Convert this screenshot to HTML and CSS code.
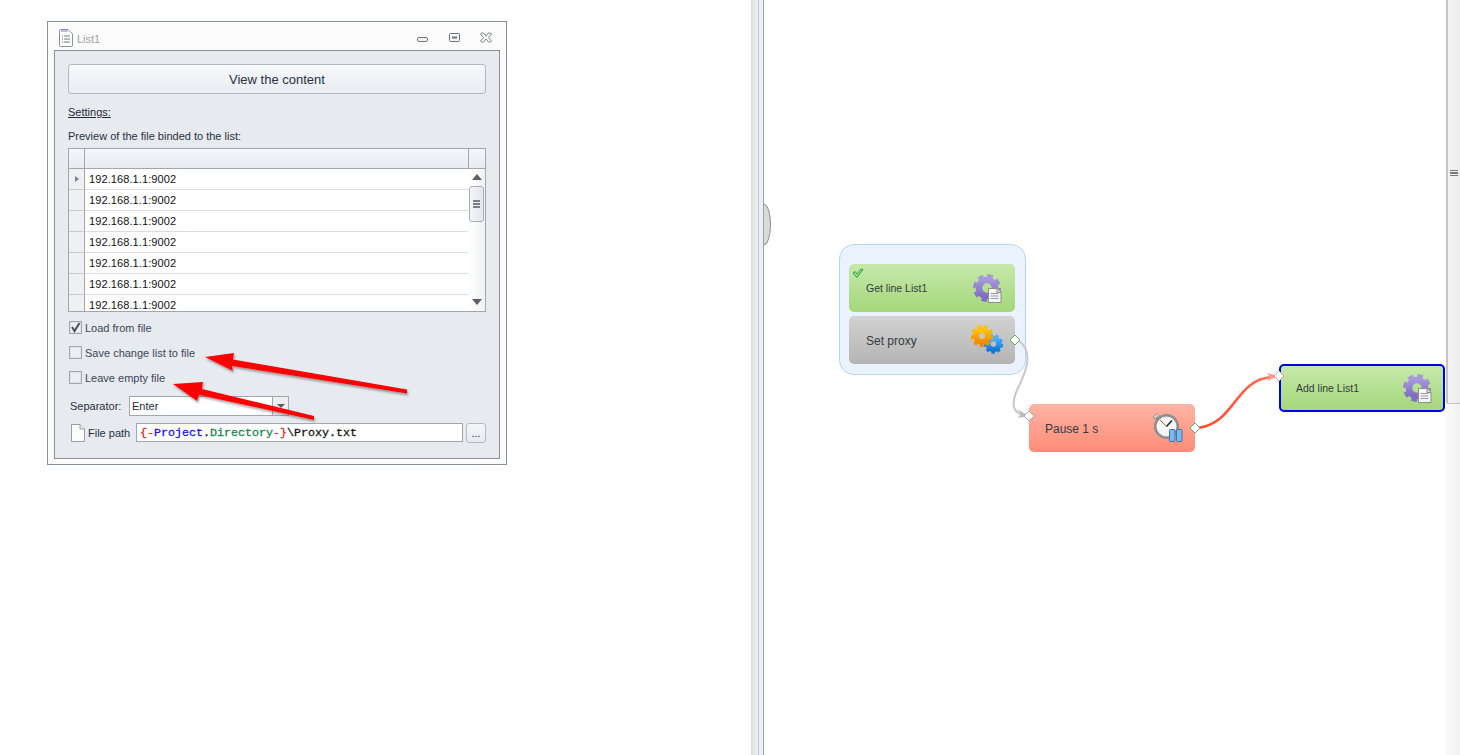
FILE: index.html
```html
<!DOCTYPE html>
<html lang="en">
<head>
<meta charset="utf-8">
<title>List1</title>
<link rel="stylesheet" href="styles.css">
</head>
<body>
<svg class="defs" width="0" height="0" aria-hidden="true">
  <defs>
    <linearGradient id="purple" x1="0" y1="0" x2="0" y2="1"><stop offset="0" stop-color="#a797de"/><stop offset="1" stop-color="#7f6cc4"/></linearGradient>
    <linearGradient id="orange" x1="0" y1="0" x2="0" y2="1"><stop offset="0" stop-color="#ffc400"/><stop offset="1" stop-color="#f08a00"/></linearGradient>
    <linearGradient id="blue" x1="0" y1="0" x2="0" y2="1"><stop offset="0" stop-color="#47b4ff"/><stop offset="1" stop-color="#1276d8"/></linearGradient>
    <linearGradient id="redfade" x1="0" y1="0" x2="1" y2="0"><stop offset="0" stop-color="#ff4526"/><stop offset="1" stop-color="#ff6d55"/></linearGradient>
    <radialGradient id="face" cx=".45" cy=".4" r=".7"><stop offset="0" stop-color="#ffffff"/><stop offset=".7" stop-color="#f2f2f2"/><stop offset="1" stop-color="#c4c4c4"/></radialGradient>
    <filter id="arrowshadow" x="-10%" y="-30%" width="120%" height="160%"><feDropShadow dx="1" dy="2" stdDeviation="1" flood-color="#555" flood-opacity=".55"/></filter>
    <symbol id="gear-doc" viewBox="0 0 30 30">
      <circle cx="15" cy="15" r="11.5" fill="none" stroke="url(#purple)" stroke-width="5" stroke-dasharray="5.2 3.83"/>
      <circle cx="15" cy="15" r="8" fill="none" stroke="url(#purple)" stroke-width="6.5"/>
      <path d="M16.5 15.5h9l3.500 3.500v10.500h-12.500z" fill="#f6f6f2" stroke="#8b8f8a"/>
      <path d="M25 15.500v4h4" fill="#d9d9d4" stroke="#8b8f8a"/>
      <path d="M18.500 20.500h8M18.500 23h8M18.500 25.500h8" stroke="#9a94b8"/>
    </symbol>
    <symbol id="doc" viewBox="0 0 14 18">
      <path d="M.5.5h8.500l4.500 4.500v12.500h-13z" fill="#fdfdfd" stroke="#9a9fa6"/>
      <path d="M9 .5v4.500h4.500" fill="#eceef0" stroke="#9a9fa6"/>
    </symbol>
  </defs>
</svg>

<main class="left-pane">
  <section class="window">
    <header class="titlebar">
      <svg class="title-icon" width="14" height="18" viewBox="0 0 14 18">
        <path d="M1.500.5h7.500l4.500 4.500v11.500a1 1 0 0 1-1 1h-11a1 1 0 0 1-1-1v-15a1 1 0 0 1 1-1z" fill="#fff" stroke="#8b8f96"/>
        <path d="M2 1h7v2H2z" fill="#c9b8ea"/>
        <path d="M3 7h1M5 7h6M3 10h1M5 10h6M3 13h1M5 13h6" stroke="#70757c"/>
      </svg>
      <span class="title-text">List1</span>
      <div class="win-buttons">
        <svg width="12" height="12" viewBox="0 0 12 12"><rect x=".5" y="5.500" width="10" height="4" rx="1.500" fill="#f4f5f6" stroke="#6f747b"/></svg>
        <svg width="12" height="12" viewBox="0 0 12 12"><rect x=".5" y="1.500" width="10" height="8" rx="1" fill="#f4f5f6" stroke="#6f747b"/><path d="M3 5.500h5" stroke="#6f747b" stroke-width="2"/></svg>
        <svg width="12" height="12" viewBox="0 0 12 12"><path d="M1.500 1h2l2.500 3 2.500-3h2l1 1-3 3.500 3 3.500-1 1h-2l-2.500-3-2.500 3h-2l-1-1 3-3.500-3-3.500z" fill="#f8f8f8" stroke="#7d8288"/></svg>
      </div>
    </header>
    <div class="panel">
      <button class="view-btn">View the content</button>
      <div class="settings">Settings:</div>
      <div class="preview">Preview of the file binded to the list:</div>

      <div class="grid">
        <div class="grid-head">
          <div class="head-sel"></div>
          <div class="head-main"></div>
          <div class="head-scroll"></div>
        </div>
        <div class="grid-body">
          <div class="rows">
            <div class="row"><div class="sel"><span class="row-marker"></span></div><div class="cell">192.168.1.1:9002</div></div>
            <div class="row"><div class="sel"></div><div class="cell">192.168.1.1:9002</div></div>
            <div class="row"><div class="sel"></div><div class="cell">192.168.1.1:9002</div></div>
            <div class="row"><div class="sel"></div><div class="cell">192.168.1.1:9002</div></div>
            <div class="row"><div class="sel"></div><div class="cell">192.168.1.1:9002</div></div>
            <div class="row"><div class="sel"></div><div class="cell">192.168.1.1:9002</div></div>
            <div class="row"><div class="sel"></div><div class="cell">192.168.1.1:9002</div></div>
          </div>
          <div class="vscroll">
            <span class="tri-up"></span>
            <div class="thumb"><span></span><span></span><span></span></div>
            <span class="tri-down"></span>
          </div>
        </div>
      </div>

      <div class="checks">
        <label class="check"><span class="box on"><svg width="11" height="11" viewBox="0 0 11 11"><path d="M2 5l2.500 4L9.500 1" fill="none" stroke="#4a4f55" stroke-width="2"/></svg></span>Load from file</label>
        <label class="check"><span class="box"></span>Save change list to file</label>
        <label class="check"><span class="box"></span>Leave empty file</label>
      </div>

      <div class="sep-row">
        <span class="sep-label">Separator:</span>
        <div class="combo"><span class="combo-val">Enter</span><span class="combo-btn"><span class="tri-down small"></span></span></div>
      </div>

      <div class="file-row">
        <svg class="file-icon" width="14" height="18"><use href="#doc"/></svg>
        <span class="file-label">File path</span>
        <div class="path-input"><span class="c-red">{-</span><span class="c-blue">Project</span>.<span class="c-green">Directory</span><span class="c-red">-}</span>\Proxy.txt</div>
        <button class="dots-btn">...</button>
      </div>
    </div>
  </section>

  <svg class="arrows" width="460" height="130" viewBox="0 0 460 130">
    <g fill="#ff0000" filter="url(#arrowshadow)">
      <path d="M155 27L184 23 183 29.500 357 59.500 357 63.500 182 36 183 41z"/>
      <path d="M123 54L153 52 152 59 264 86 264 90 149 65 147 71z"/>
    </g>
  </svg>
</main>

<div class="splitter"><span class="split-grip"></span></div>

<section class="canvas">
  <div class="group"></div>
  <div class="node green get-line">
    <svg class="tick" width="12" height="11" viewBox="0 0 12 11"><path d="M1 5l4 4.500L11 1.500 9 1 5 6 3 3.500z" fill="#8fe08a" stroke="#3a9a45"/></svg>
    <span class="label small-label">Get line List1</span>
    <svg class="node-icon" width="30" height="30"><use href="#gear-doc"/></svg>
  </div>
  <div class="node gray set-proxy">
    <span class="label">Set proxy</span>
    <svg class="node-icon wide" width="34" height="30" viewBox="0 0 34 30">
      <circle cx="23.500" cy="19" r="8" fill="none" stroke="url(#blue)" stroke-width="3.500" stroke-dasharray="3.200 2.400"/>
      <circle cx="23.500" cy="19" r="5.500" fill="none" stroke="url(#blue)" stroke-width="5.500"/>
      <circle cx="12" cy="11" r="9.500" fill="none" stroke="url(#orange)" stroke-width="3.500" stroke-dasharray="3.800 2.830"/>
      <circle cx="12" cy="11" r="6" fill="none" stroke="url(#orange)" stroke-width="6"/>
    </svg>
  </div>
  <div class="node red pause">
    <span class="label">Pause 1 s</span>
    <svg class="node-icon clock" width="34" height="33" viewBox="0 0 34 33">
      <path d="M3 5l4-3.500 2 2-4 3.500z" fill="#d8d8d8" stroke="#8e8e8e"/>
      <path d="M6 6l3 3" stroke="#8e8e8e" stroke-width="2"/>
      <circle cx="16.500" cy="14.500" r="11.300" fill="url(#face)" stroke="#8e8e8e" stroke-width="2.500"/>
      <path d="M16.500 14.500L10 8" stroke="#e04a3a"/>
      <path d="M16.500 14.500l5.500-6" stroke="#222" stroke-width="1.500"/>
      <rect x="19.500" y="17.500" width="5.500" height="12" rx="1" fill="#7fb8e8" stroke="#2f78b8"/>
      <rect x="26.500" y="17.500" width="5.500" height="12" rx="1" fill="#7fb8e8" stroke="#2f78b8"/>
    </svg>
  </div>
  <div class="node green add-line selected">
    <span class="label small-label">Add line List1</span>
    <svg class="node-icon" width="30" height="30"><use href="#gear-doc"/></svg>
  </div>

  <svg class="wires" width="696" height="755" viewBox="764 0 696 755">
    <path d="M1019 341C1034 352 1026 372 1018 388C1011 403 1012 413 1024 415" fill="none" stroke="#c8c8c8" stroke-width="2"/>
    <path d="M1017 409L1029 416 1018 418 1021 414z" fill="#bdbdbd"/>
    <path d="M1197 428C1236 424 1234 379 1273 377" fill="none" stroke="url(#redfade)" stroke-width="2.500"/>
    <path d="M1267 373L1279 376 1267 381 1270 377z" fill="#ff9a8c"/>
    <path d="M1015 335l5 5-5 5-5-5z" fill="#fff" stroke="#5fae62"/>
    <path d="M1029 411l5 5-5 5-5-5z" fill="#fff" stroke="#a9a9a9"/>
    <path d="M1195 423l5 5-5 5-5-5z" fill="#fff" stroke="#5fae62"/>
    <path d="M1279 371l5 5-5 5-5-5z" fill="#fff" stroke="#a9a9a9"/>
  </svg>

  <aside class="side-top"><span></span><span></span><span></span></aside>
  <div class="side-bottom"></div>
</section>
</body>
</html>
```

FILE: styles.css
```css
* { box-sizing: border-box; }
html, body { height: 100%; }
body {
  margin: 0;
  display: flex;
  height: 755px;
  overflow: hidden;
  background: #fff;
  font-family: "Liberation Sans", Arial, sans-serif;
  font-size: 11px;
  color: #27313f;
}
.defs { position: absolute; }

/* left pane */
.left-pane {
  position: relative;
  width: 751px;
  flex: none;
  padding: 21px 0 0 47px;
}
.window {
  width: 460px;
  height: 444px;
  border: 1px solid #8b9096;
  background: #fbfbfb;
  padding: 0 6px 5px;
  display: flex;
  flex-direction: column;
}
.titlebar {
  height: 28px;
  flex: none;
  display: flex;
  align-items: center;
  color: #9aa1aa;
  padding-left: 5px;
}
.title-icon { margin-top: 4px; }
.title-text { margin-left: 4px; margin-top: 5px; font-size: 11px; }
.win-buttons {
  margin-left: auto;
  display: flex;
  gap: 20px;
  padding-right: 8px;
  margin-top: 4px;
}
.win-buttons svg:last-child { margin-left: -1px; }
.panel {
  flex: 1;
  border: 1px solid #8b9096;
  background: #e7eaef;
  padding: 13px 13px 0;
}
.view-btn {
  display: block;
  width: 100%;
  height: 30px;
  border: 1px solid #b4b9c0;
  border-radius: 3px;
  background: linear-gradient(#f6f8fb, #e9ecf1);
  font: 13px "Liberation Sans", Arial, sans-serif;
  color: #27313f;
  padding: 0;
}
.settings {
  margin-top: 11px;
  height: 14px;
  line-height: 14px;
  text-decoration: underline;
  color: #1f2a38;
}
.preview {
  margin-top: 10px;
  height: 14px;
  line-height: 14px;
}

/* grid */
.grid {
  margin-top: 5px;
  height: 164px;
  border: 1px solid #a2a7ae;
  background: #fff;
  display: flex;
  flex-direction: column;
  overflow: hidden;
}
.grid-head {
  height: 20px;
  flex: none;
  display: flex;
  border-bottom: 1px solid #a2a7ae;
  background: linear-gradient(#f4f6fa, #e8ebf0);
}
.head-sel { width: 16px; border-right: 1px solid #a2a7ae; }
.head-main { flex: 1; border-right: 1px solid #a2a7ae; }
.head-scroll { width: 16px; }
.grid-body { flex: 1; display: flex; min-height: 0; }
.rows { flex: 1; overflow: hidden; }
.row {
  height: 21px;
  display: flex;
  border-bottom: 1px solid #d9dce1;
}
.sel {
  width: 16px;
  flex: none;
  margin-bottom: -1px;
  background: #eef0f4;
  border-right: 1px solid #a2a7ae;
  border-bottom: 1px solid #c6cad0;
  display: flex;
  align-items: center;
  padding-left: 6px;
}
.row-marker {
  border-left: 4px solid #7d8288;
  border-top: 3.500px solid transparent;
  border-bottom: 3.500px solid transparent;
}
.cell {
  flex: 1;
  padding-left: 4px;
  line-height: 20px;
  color: #101010;
  letter-spacing: .1px;
}

/* scrollbar */
.vscroll {
  width: 17px;
  flex: none;
  background: linear-gradient(90deg, #fff, #f0f1f3);
  display: flex;
  flex-direction: column;
  align-items: center;
  padding-top: 5px;
}
.tri-up {
  border-bottom: 6px solid #5a5f66;
  border-left: 5px solid transparent;
  border-right: 5px solid transparent;
}
.tri-down {
  margin-top: 77px;
  border-top: 6px solid #5a5f66;
  border-left: 5px solid transparent;
  border-right: 5px solid transparent;
}
.tri-down.small { margin: 0; border-top-width: 4px; border-left-width: 4px; border-right-width: 4px; }
.thumb {
  margin-top: 6px;
  width: 15px;
  height: 36px;
  flex: none;
  border: 1px solid #a9aeb5;
  border-radius: 3px;
  background: linear-gradient(90deg, #f3f5f8, #e3e6ea);
  display: flex;
  flex-direction: column;
  justify-content: center;
  align-items: center;
  gap: 1px;
}
.thumb span { width: 7px; height: 2px; background: #7c8085; }

/* checkboxes */
.checks { margin-top: 3px; }
.check {
  height: 25px;
  display: flex;
  align-items: center;
  gap: 3px;
  padding-left: 1px;
  color: #3c4654;
}
.box {
  width: 13px;
  height: 13px;
  border: 1px solid #a2a7ae;
  background: #eceef1;
  box-shadow: inset 0 0 0 1px #dfe2e6;
  display: flex;
  align-items: center;
  justify-content: center;
}
.box.on { background: #f0f1f4; }

/* separator */
.sep-row {
  margin-top: 6px;
  height: 20px;
  display: flex;
  align-items: center;
  padding-left: 2px;
}
.sep-label { width: 59px; }
.combo {
  width: 160px;
  height: 20px;
  border: 1px solid #a2a7ae;
  background: #fff;
  display: flex;
}
.combo-val { flex: 1; line-height: 18px; padding-left: 2px; color: #1f2a38; }
.combo-btn {
  width: 16px;
  border-left: 1px solid #a2a7ae;
  background: #eceef2;
  display: flex;
  align-items: center;
  justify-content: center;
}

/* file path */
.file-row {
  margin-top: 7px;
  height: 20px;
  display: flex;
  align-items: center;
  padding-left: 3px;
}
.file-label { margin-left: 3px; width: 48px; }
.path-input {
  align-self: flex-start;
  width: 327px;
  height: 19px;
  border: 1px solid #a2a7ae;
  background: #fff;
  padding-left: 3px;
  font: 11.670px/18px "Liberation Mono", "Courier New", monospace;
  -webkit-text-stroke: .3px currentColor;
  color: #141414;
  white-space: nowrap;
}
.c-red { color: #e8202a; }
.c-blue { color: #1414e6; }
.c-green { color: #108a4a; }
.dots-btn {
  margin-left: 3px;
  width: 20px;
  height: 20px;
  border: 1px solid #b4b9c0;
  border-radius: 3px;
  background: linear-gradient(#f4f6f9, #e6e9ee);
  font: 11px "Liberation Sans", Arial, sans-serif;
  color: #27313f;
  padding: 0;
}

/* annotation arrows over the window */
.arrows {
  position: absolute;
  left: 50px;
  top: 330px;
}

/* splitter */
.splitter {
  position: relative;
  z-index: 1;
  width: 13px;
  flex: none;
  background: linear-gradient(90deg, #dcdcdc, #f0f0f0 50%, #c6c8cc 50%, #c6c8cc 58%, #e9eff7 58%, #e9eff7 92%, #9ea3a9 92%);
}
.split-grip {
  position: absolute;
  left: 13px;
  top: 204px;
  width: 7px;
  height: 41px;
  background: #dadada;
  border: 1px solid #8c8c8c;
  border-left: 0;
  border-radius: 0 7px 7px 0 / 0 21px 21px 0;
}

/* canvas */
.canvas { position: relative; flex: 1; background: #fff; }
.group {
  position: absolute;
  left: 75px;
  top: 244px;
  width: 187px;
  height: 131px;
  background: #eaf3fd;
  border: 1px solid #b6d4f1;
  border-radius: 15px;
}
.node {
  position: absolute;
  width: 166px;
  height: 48px;
  border-radius: 5px;
  display: flex;
  align-items: center;
  padding: 1px 0 0 17px;
}
.node.green { background: linear-gradient(#c6e9aa, #a4d77b); }
.node.gray { background: linear-gradient(#d2d2d2, #b4b4b4); }
.node.red { background: linear-gradient(#ffb4a6, #ff8b77); }
.get-line { left: 85px; top: 264px; padding-top: 0; }
.set-proxy { left: 85px; top: 316px; }
.pause { left: 265px; top: 404px; padding-left: 16px; }
.add-line { left: 515px; top: 364px; }
.selected { border: 2px solid #0000e6; padding: 0 0 0 15px; }
.label { font-size: 12px; color: #333a40; }
.small-label { font-size: 10.500px; }
.node-icon { position: absolute; left: 123px; top: 9px; }
.selected .node-icon { left: 121px; top: 7px; }
.node-icon.wide { left: 121px; top: 9px; }
.node-icon.clock { left: 121px; top: 8px; }
.tick { position: absolute; left: 3px; top: 4px; }
.wires { position: absolute; left: 0; top: 0; pointer-events: none; }

.side-top {
  position: absolute;
  right: 0;
  top: 0;
  width: 14px;
  height: 404px;
  background: linear-gradient(90deg, #f4f4f4, #ececec);
  border-left: 2px solid #c4c4c4;
  border-bottom: 1px solid #c4c4c4;
  border-bottom-left-radius: 2px;
  display: flex;
  flex-direction: column;
  justify-content: center;
  align-items: center;
  gap: 1px;
  padding-bottom: 57px;
}
.side-top span { width: 8px; height: 1.500px; background: #777; }
.side-bottom {
  position: absolute;
  right: 0;
  top: 404px;
  bottom: 0;
  width: 14px;
  background: linear-gradient(90deg, #fbfbfb, #f1f1f1);
}
```
